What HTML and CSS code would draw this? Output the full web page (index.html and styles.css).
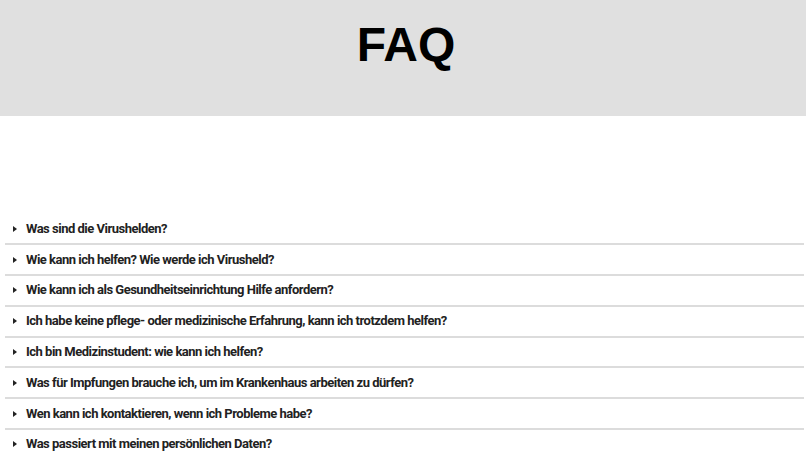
FILE: index.html
```html
<!DOCTYPE html>
<html lang="de">
<head>
    <meta charset="UTF-8">
    <meta name="viewport" content="width=device-width, initial-scale=1.0">
    <title>FAQ</title>
    <link rel="stylesheet" href="styles.css">
</head>
<body>
    <header class="page-header">
        <h1>FAQ</h1>
    </header>

    <main class="faq">
        <details class="faq-item">
            <summary>Was sind die Virushelden?</summary>
        </details>
        <details class="faq-item">
            <summary>Wie kann ich helfen? Wie werde ich Virusheld?</summary>
        </details>
        <details class="faq-item">
            <summary>Wie kann ich als Gesundheitseinrichtung Hilfe anfordern?</summary>
        </details>
        <details class="faq-item">
            <summary>Ich habe keine pflege- oder medizinische Erfahrung, kann ich trotzdem helfen?</summary>
        </details>
        <details class="faq-item">
            <summary>Ich bin Medizinstudent: wie kann ich helfen?</summary>
        </details>
        <details class="faq-item">
            <summary>Was für Impfungen brauche ich, um im Krankenhaus arbeiten zu dürfen?</summary>
        </details>
        <details class="faq-item">
            <summary>Wen kann ich kontaktieren, wenn ich Probleme habe?</summary>
        </details>
        <details class="faq-item">
            <summary>Was passiert mit meinen persönlichen Daten?</summary>
        </details>
    </main>
</body>
</html>
```

FILE: styles.css
```css
body {
    margin: 0;
    padding: 0;
    background-color: #fff;
    font-family: Roboto, "Liberation Sans", Arial, sans-serif;
    color: #222;
}
.page-header {
    box-sizing: border-box;
    height: 116px;
    padding: 17px 0 0 6px;
    background-color: #e0e0e0;
    text-align: center;
}
.page-header h1 {
    margin: 0;
    font-family: "Liberation Sans", Arial, sans-serif;
    font-size: 48px;
    font-weight: bold;
    line-height: 55px;
    color: #000;
}
.faq {
    margin-top: 98.5px;
    padding: 0 2px 0 5px;
}
.faq-item {
    border-bottom: 2px solid #dcdcdc;
}
.faq-item summary {
    display: flex;
    align-items: center;
    list-style: none;
    padding: 6.4px 10px 6.4px 8px;
    font-size: 13px;
    font-weight: bold;
    line-height: 16px;
    letter-spacing: -0.5px;
    cursor: pointer;
}
.faq-item summary::-webkit-details-marker {
    display: none;
}
.faq-item summary::before {
    content: "";
    width: 0;
    height: 0;
    margin-right: 9px;
    border-left: 4.5px solid #222;
    border-top: 3.5px solid transparent;
    border-bottom: 3.5px solid transparent;
}
.faq-item[open] summary::before {
    transform: rotate(90deg);
}
```
